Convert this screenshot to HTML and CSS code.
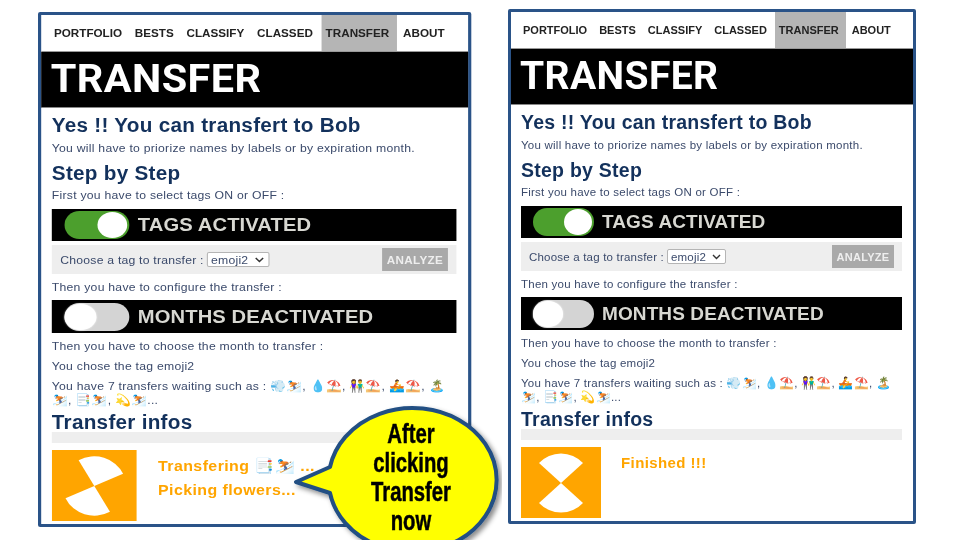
FILE: index.html
```html
<!DOCTYPE html>
<html>
<head>
  <title>Transfer</title>
  <meta charset="utf-8">
  <link rel="stylesheet" href="styles.css">
</head>
<body>
<div class="slide">

  <!-- after clicking transfer -->
  <div class="panel panel-left">
    <nav class="menu">
      <a>PORTFOLIO</a><a>BESTS</a><a>CLASSIFY</a><a>CLASSED</a><a class="active">TRANSFER</a><a>ABOUT</a>
    </nav>
    <h1 class="title">TRANSFER</h1>
    <div class="content">
      <h2 class="first">Yes !! You can transfert to Bob</h2>
      <p class="intro">You will have to priorize names by labels or by expiration month.</p>
      <h2 class="step">Step by Step</h2>
      <p class="intro">First you have to select tags ON or OFF :</p>
      <div class="switch-bar">
        <span class="switch on"><i></i></span>
        <span class="switch-label">TAGS ACTIVATED</span>
      </div>
      <div class="choose-bar">
        <label>Choose a tag to transfer :</label>
        <select><option>emoji2</option></select>
        <button>ANALYZE</button>
      </div>
      <p class="line">Then you have to configure the transfer :</p>
      <div class="switch-bar">
        <span class="switch"><i></i></span>
        <span class="switch-label">MONTHS DEACTIVATED</span>
      </div>
      <p class="line">Then you have to choose the month to transfer :</p>
      <p class="line">You chose the tag emoji2</p>
      <p class="line">You have 7 transfers waiting such as : <span class="emoji">💨⛷️</span>, <span class="emoji">💧⛱️</span>, <span class="emoji">👫⛱️</span>, <span class="emoji">🚣⛱️</span>, <span class="emoji">🏝️</span><br><span class="emoji">⛷️</span>, <span class="emoji">📑⛷️</span>, <span class="emoji">💫⛷️</span>...</p>
      <h2 class="infos">Transfer infos</h2>
      <div class="progress"></div>
      <div class="status">
        <svg class="loader" viewBox="0 0 80 71"><rect width="80" height="71" fill="#ffa500"/><g transform="translate(40 36) rotate(18)"><path d="M0 0L-22-20A30 30 0 0 1 22-20Z" fill="#fff"/><path d="M0 0L-22 20A30 30 0 0 0 22 20Z" fill="#fff"/></g></svg>
        <div class="status-text">
          <div>Transfering 📑⛷️ ...</div>
          <div class="status-two">Picking flowers...</div>
        </div>
      </div>
    </div>
  </div>

  <!-- finished -->
  <div class="panel panel-right">
    <nav class="menu">
      <a>PORTFOLIO</a><a>BESTS</a><a>CLASSIFY</a><a>CLASSED</a><a class="active">TRANSFER</a><a>ABOUT</a>
    </nav>
    <h1 class="title">TRANSFER</h1>
    <div class="content">
      <h2 class="first">Yes !! You can transfert to Bob</h2>
      <p class="intro">You will have to priorize names by labels or by expiration month.</p>
      <h2 class="step">Step by Step</h2>
      <p class="intro">First you have to select tags ON or OFF :</p>
      <div class="switch-bar">
        <span class="switch on"><i></i></span>
        <span class="switch-label">TAGS ACTIVATED</span>
      </div>
      <div class="choose-bar">
        <label>Choose a tag to transfer :</label>
        <select><option>emoji2</option></select>
        <button>ANALYZE</button>
      </div>
      <p class="line">Then you have to configure the transfer :</p>
      <div class="switch-bar">
        <span class="switch"><i></i></span>
        <span class="switch-label">MONTHS DEACTIVATED</span>
      </div>
      <p class="line">Then you have to choose the month to transfer :</p>
      <p class="line">You chose the tag emoji2</p>
      <p class="line">You have 7 transfers waiting such as : <span class="emoji">💨⛷️</span>, <span class="emoji">💧⛱️</span>, <span class="emoji">👫⛱️</span>, <span class="emoji">🚣⛱️</span>, <span class="emoji">🏝️</span><br><span class="emoji">⛷️</span>, <span class="emoji">📑⛷️</span>, <span class="emoji">💫⛷️</span>...</p>
      <h2 class="infos">Transfer infos</h2>
      <div class="progress"></div>
      <div class="status">
        <svg class="loader" viewBox="0 0 80 71"><rect width="80" height="71" fill="#ffa500"/><g transform="translate(40 36)"><path d="M0 0L-22-20A30 30 0 0 1 22-20Z" fill="#fff"/><path d="M0 0L-22 20A30 30 0 0 0 22 20Z" fill="#fff"/></g></svg>
        <div class="status-text">
          <div>Finished !!!</div>
        </div>
      </div>
    </div>
  </div>

  <!-- yellow bubble -->
  <svg class="bubble-shape" viewBox="0 0 220 160">
    <defs>
      <filter id="soft" x="-10%" y="-10%" width="125%" height="125%"><feDropShadow dx="3" dy="3" stdDeviation="2.5" flood-color="#000" flood-opacity="0.45"/></filter>
    </defs>
    <path d="M48 67L14 82L48 93A84 72 0 1 0 48 67Z" fill="#ffff00" stroke="#234f83" stroke-width="4" stroke-linejoin="round" filter="url(#soft)"/>
  </svg>
  <div class="bubble-text">After<br>clicking<br>Transfer<br>now</div>

</div>
</body>
</html>
```

FILE: styles.css
```css
* {
  box-sizing: border-box;
}

body {
  margin: 0;
  background: #fff;
  font-family: "Liberation Sans", Arial, sans-serif;
}

/* Two screenshots side by side on the slide */
.slide {
  position: relative;
  width: 960px;
  height: 540px;
  overflow: hidden;
  display: flex;
  align-items: flex-start;
  gap: 62px;
  padding-left: 38px;
}

.panel {
  width: 408px;
  height: 515px;
  flex: none;
  border: 3px solid #2a5388;
  border-radius: 2px;
  background: #fff;
  filter: blur(0.35px);
}

/* left shot is a bit wider than the right one */
.panel-left {
  margin-top: 12px;
  transform: scaleX(1.062);
  transform-origin: left top;
}

.panel-right {
  margin-top: 9px;
}

/* Menu */
.menu {
  display: flex;
  height: 37px;
  padding-left: 6px;
  border-bottom: 1px solid #999;
}

.menu a {
  padding: 0 6px;
  line-height: 36px;
  font-size: 11px;
  font-weight: bold;
  color: #222;
}

.menu a.active {
  margin-left: 2px;
  padding: 0 7px 0 4px;
  background: #b5b5b5;
}

.title {
  margin: 0;
  height: 56px;
  padding-left: 9px;
  background: #000;
  border-bottom: 1px solid #888;
  color: #fff;
  font-family: Roboto, "Liberation Sans", sans-serif;
  font-size: 39px;
  line-height: 54px;
  letter-spacing: 0.4px;
}

.content {
  padding: 0 11px 0 10px;
}

h2 {
  margin: 0;
  font-size: 19.5px;
  line-height: 20px;
  letter-spacing: 0.25px;
  color: #13315c;
}

.first {
  margin-top: 7px;
}

.step {
  margin-top: 8px;
}

.infos {
  margin-top: 5px;
}

p {
  margin: 0;
  font-size: 11.5px;
  line-height: 14px;
  letter-spacing: 0.23px;
  color: #3b4a6b;
}

.emoji {
  font-size: 12px;
  line-height: 12px;
}

.intro {
  margin-top: 6px;
}

.step + .intro {
  margin-top: 5px;
}

.line {
  margin-top: 6px;
}

/* Black bar with the on/off switch */
.switch-bar {
  display: flex;
  align-items: center;
  height: 32px;
  margin-top: 7px;
  padding-left: 12px;
  gap: 8px;
  background: #000;
}

.line + .switch-bar {
  height: 33px;
  margin-top: 6px;
}

.switch {
  display: block;
  width: 61px;
  height: 28px;
  padding: 1px 0;
  border-radius: 14px;
  background: #d4d4d4;
}

.switch i {
  display: block;
  width: 30px;
  height: 26px;
  border-radius: 50%;
  background: #fff;
  box-shadow: 0 0 2px #fff;
}

.switch.on {
  background: #4c9f2d;
}

.switch.on i {
  width: 28px;
  margin-left: 31px;
  box-shadow: none;
}

.switch-label {
  font-size: 19px;
  font-weight: bold;
  letter-spacing: 0.1px;
  color: #d8d8d2;
}

.choose-bar {
  display: flex;
  align-items: center;
  height: 29px;
  margin-top: 4px;
  padding: 0 8px;
  gap: 3px;
  background: #eee;
  font-size: 11.5px;
  letter-spacing: 0.2px;
  color: #3b4a6b;
}

.choose-bar select {
  appearance: none;
  width: 59px;
  height: 15px;
  padding: 0 0 0 3px;
  border: 1px solid #b5b5b5;
  border-radius: 2px;
  background: #fff url("data:image/svg+xml,%3Csvg xmlns='http://www.w3.org/2000/svg' width='9' height='6'%3E%3Cpath d='M1 1l3.5 3.5L8 1' fill='none' stroke='%23333' stroke-width='1.4'/%3E%3C/svg%3E") no-repeat right 4px center;
  font-family: inherit;
  font-size: 11.5px;
  letter-spacing: 0.2px;
  color: #3b4a6b;
}

.choose-bar button {
  width: 62px;
  height: 23px;
  margin-left: auto;
  padding: 0;
  border: 0;
  background: #a9a9a9;
  color: #eee;
  font-family: inherit;
  font-size: 11px;
  font-weight: bold;
  letter-spacing: 0.3px;
}

.progress {
  height: 11px;
  background: #eee;
}

.status {
  display: flex;
  gap: 20px;
  margin-top: 7px;
}

.loader {
  display: block;
  width: 80px;
  height: 71px;
  flex: none;
}

.status-text {
  padding-top: 7px;
  font-size: 15px;
  line-height: 17px;
  font-weight: bold;
  letter-spacing: 0.4px;
  color: #ffa500;
}

.status-two {
  margin-top: 7px;
}

/* Speech bubble lying over the left shot */
.bubble-shape {
  position: absolute;
  left: 282px;
  top: 400px;
  width: 220px;
  height: 160px;
}

.bubble-text {
  position: absolute;
  left: 351px;
  top: 420px;
  width: 120px;
  text-align: center;
  font-size: 27px;
  line-height: 29px;
  font-weight: bold;
  color: #000;
  -webkit-text-stroke: 0.5px #000;
  transform: scaleX(0.75);
}
```
